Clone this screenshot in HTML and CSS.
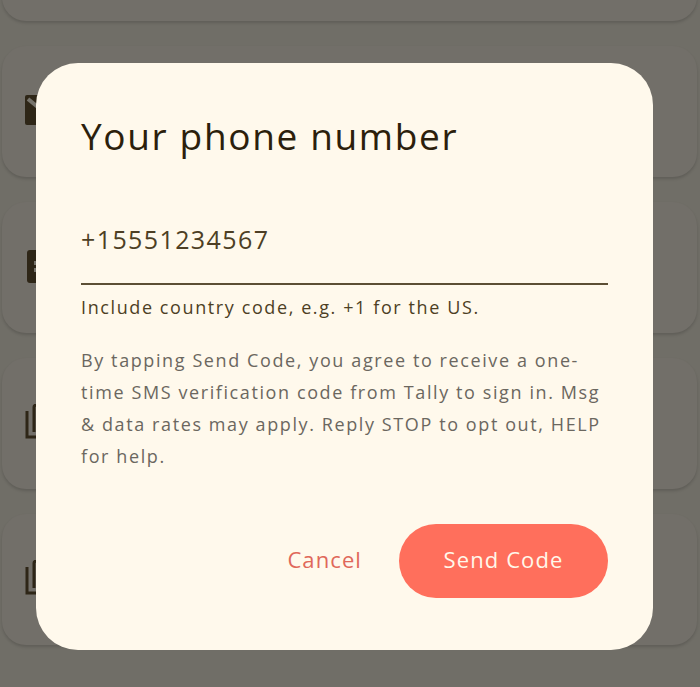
FILE: index.html
```html
<!doctype html>
<html lang="en">

<head>
    <meta charset="utf-8">
    <meta name="viewport" content="width=device-width, initial-scale=1, minimum-scale=1">
    <title>Your phone number</title>
    <link rel="stylesheet" href="styles.css">
</head>

<body>
    <div class="card-list">
        <div class="card card-top"></div>
        <div class="card">
            <svg class="card-icon" width="24" height="30" viewBox="0 0 24 30">
                <rect x="0" y="0" width="24" height="30" rx="2" fill="#2e2617"></rect>
                <path d="M3 4 L14 13" stroke="#77746c" stroke-width="4" fill="none"></path>
            </svg>
        </div>
        <div class="card">
            <svg class="card-icon" width="24" height="33" viewBox="0 0 24 33">
                <rect x="2" y="0" width="22" height="33" rx="3" fill="#2e2617"></rect>
                <rect x="9" y="11" width="5" height="4" fill="#77746c"></rect>
                <rect x="9" y="18" width="5" height="4" fill="#77746c"></rect>
            </svg>
        </div>
        <div class="card">
            <svg class="card-icon" width="24" height="36" viewBox="0 0 24 36">
                <path d="M2 7 V33 H22" stroke="#2e2617" stroke-width="3" fill="none"></path>
                <path d="M9 28 V3 Q9 1 12 1 H24" stroke="#2e2617" stroke-width="3" fill="none"></path>
            </svg>
        </div>
        <div class="card">
            <svg class="card-icon" width="24" height="36" viewBox="0 0 24 36">
                <path d="M2 7 V33 H22" stroke="#2e2617" stroke-width="3" fill="none"></path>
                <path d="M9 28 V3 Q9 1 12 1 H24" stroke="#2e2617" stroke-width="3" fill="none"></path>
            </svg>
        </div>
    </div>

    <div class="dialog">
        <h1 class="dialog-title">Your phone number</h1>
        <div class="phone-input">+15551234567</div>
        <div class="helper">Include country code, e.g. +1 for the US.</div>
        <p class="consent">By tapping Send Code, you agree to receive a one-time SMS verification code from Tally to sign in. Msg &amp; data rates may apply. Reply STOP to opt out, HELP for help.</p>
        <div class="actions">
            <button class="btn-cancel">Cancel</button>
            <button class="btn-send">Send Code</button>
        </div>
    </div>
</body>

</html>
```

FILE: styles.css
```css
html,
body {
    margin: 0;
    height: 100%;
}

body {
    position: relative;
    width: 700px;
    height: 687px;
    overflow: hidden;
    background: #706e67;
    font-family: "Open Sans", "Noto Sans", sans-serif;
}

.card-list {
    display: flex;
    flex-direction: column;
    gap: 25px;
    padding: 0 3px 0 2px;
    margin-top: -110px;
}

.card {
    height: 131px;
    box-sizing: border-box;
    padding: 0 0 3px 23px;
    display: flex;
    align-items: center;
    background: #726f69;
    border-radius: 24px;
    box-shadow: 0 2px 3px rgba(0, 0, 0, 0.15);
}

.card-icon {
    flex: none;
}

.dialog {
    position: absolute;
    left: 36px;
    top: 63px;
    width: 617px;
    height: 587px;
    box-sizing: border-box;
    padding: 45px 45px 52px 45px;
    background: #fff9ec;
    border-radius: 42px;
    display: flex;
    flex-direction: column;
}

.dialog-title {
    margin: 0;
    font-size: 37px;
    line-height: 56px;
    font-weight: 400;
    letter-spacing: 1.65px;
    color: #2c1f0c;
}

.phone-input {
    margin-top: 57px;
    padding-bottom: 26px;
    font-size: 25px;
    line-height: 36px;
    letter-spacing: 1.4px;
    color: #4d3f24;
    border-bottom: 2px solid #5c4f35;
}

.helper {
    margin-top: 8px;
    font-size: 18px;
    line-height: 28px;
    letter-spacing: 1.6px;
    color: #4d3f24;
}

.consent {
    margin: 23px 0 0 0;
    font-size: 18px;
    line-height: 32px;
    letter-spacing: 1.6px;
    color: #6b675f;
}

.actions {
    margin-top: auto;
    display: flex;
    justify-content: flex-end;
    align-items: center;
    gap: 37px;
}

.actions button {
    border: none;
    font-family: inherit;
    font-size: 22px;
    padding: 0 0 4px 0;
    letter-spacing: 1.1px;
}

.btn-cancel {
    background: none;
    color: #e0685a;
}

.btn-send {
    width: 209px;
    height: 74px;
    border-radius: 37px;
    background: #ff6f5c;
    color: #fff8ea;
}
```
